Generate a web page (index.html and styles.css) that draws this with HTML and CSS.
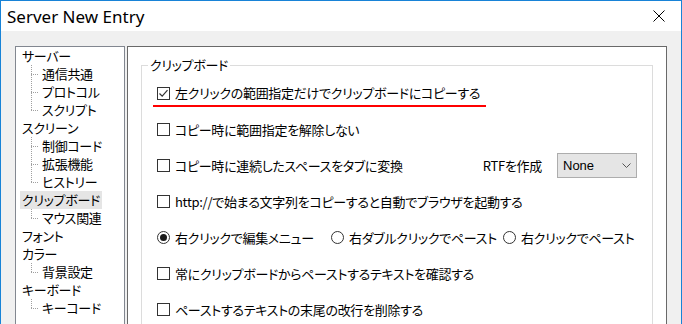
FILE: index.html
```html
<!DOCTYPE html>
<html lang="ja">
<head>
    <meta charset="UTF-8">
    <title>Server New Entry</title>
    <link rel="stylesheet" href="styles.css">
</head>
<body>
    <div class="window">
        <div class="titlebar">
            <span class="title">Server New Entry</span>
            <svg class="close" width="12" height="12" viewBox="0 0 12 12">
                <path d="M0.5 0.5 L11.5 11.5 M11.5 0.5 L0.5 11.5" stroke="#000" stroke-width="1" fill="none"/>
            </svg>
        </div>

        <div class="client">
            <ul class="tree">
                <li><span class="label">サーバー</span></li>
                <li class="child"><span class="label">通信共通</span></li>
                <li class="child"><span class="label">プロトコル</span></li>
                <li class="child last"><span class="label">スクリプト</span></li>
                <li><span class="label">スクリーン</span></li>
                <li class="child"><span class="label">制御コード</span></li>
                <li class="child"><span class="label">拡張機能</span></li>
                <li class="child last"><span class="label">ヒストリー</span></li>
                <li class="selected"><span class="label">クリップボード</span></li>
                <li class="child last"><span class="label">マウス関連</span></li>
                <li><span class="label">フォント</span></li>
                <li><span class="label">カラー</span></li>
                <li class="child last"><span class="label">背景設定</span></li>
                <li><span class="label">キーボード</span></li>
                <li class="child last"><span class="label">キーコード</span></li>
            </ul>

            <div class="page">
                <div class="group">
                    <span class="group-title">クリップボード</span>

                    <div class="row">
                        <span class="marked">
                            <span class="check">
                                <svg width="11" height="11" viewBox="0 0 11 11">
                                    <path d="M1.5 5.5 L4.2 8.2 L9.5 2.2" stroke="#333" stroke-width="1.2" fill="none"/>
                                </svg>
                            </span>
                            左クリックの範囲指定だけでクリップボードにコピーする
                        </span>
                    </div>
                    <div class="row">
                        <span class="check"></span>コピー時に範囲指定を解除しない
                    </div>
                    <div class="row">
                        <span class="check"></span>コピー時に連続したスペースをタブに変換
                        <span class="rtf">RTFを作成</span>
                        <span class="combo">None
                            <svg width="9" height="5" viewBox="0 0 9 5">
                                <path d="M0.5 0.5 L4.5 4.5 L8.5 0.5" stroke="#555" stroke-width="1" fill="none"/>
                            </svg>
                        </span>
                    </div>
                    <div class="row">
                        <span class="check"></span>http://で始まる文字列をコピーすると自動でブラウザを起動する
                    </div>
                    <div class="row radios">
                        <span class="radio-item"><span class="radio on"></span>右クリックで編集メニュー</span>
                        <span class="radio-item"><span class="radio"></span>右ダブルクリックでペースト</span>
                        <span class="radio-item"><span class="radio"></span>右クリックでペースト</span>
                    </div>
                    <div class="row">
                        <span class="check"></span>常にクリップボードからペーストするテキストを確認する
                    </div>
                    <div class="row">
                        <span class="check"></span>ペーストするテキストの末尾の改行を削除する
                    </div>
                </div>
            </div>
        </div>
    </div>
</body>
</html>
```

FILE: styles.css
```css
body {
    margin: 0;
    font-family: "Noto Sans CJK JP", sans-serif;
    font-size: 13px;
    letter-spacing: -0.3px;
    font-feature-settings: "palt";
    color: #000;
}
.window {
    width: 682px;
    height: 324px;
    box-sizing: border-box;
    border: 1px solid #1883d7;
    border-bottom: none;
    background: #f0f0f0;
    overflow: hidden;
}
.titlebar {
    height: 30px;
    background: #fff;
    display: flex;
    align-items: center;
    justify-content: space-between;
    padding: 0 16px 0 6px;
}
.title {
    font-family: "Noto Sans", sans-serif;
    font-size: 17px;
    letter-spacing: 0;
}
.client {
    display: flex;
    gap: 2px;
    padding: 15px 14px 0;
}

/* tree on the left */
.tree {
    width: 110px;
    height: 300px;
    flex-shrink: 0;
    box-sizing: border-box;
    border: 1px solid #828790;
    background: #fff;
    margin: 0;
    padding: 0;
    list-style: none;
}
.tree li {
    height: 18px;
    line-height: 18px;
    padding-left: 4px;
}
.tree li.child {
    padding-left: 24px;
    background-image:
        repeating-linear-gradient(to bottom, #a0a0a0 0 1px, transparent 1px 2px),
        repeating-linear-gradient(to right, #a0a0a0 0 1px, transparent 1px 2px);
    background-size: 1px 18px, 8px 1px;
    background-position: 15px 0, 15px 9px;
    background-repeat: no-repeat;
}
.tree li.child.last {
    background-size: 1px 10px, 8px 1px;
}
.tree .label {
    display: inline-block;
    height: 18px;
    padding: 0 2px;
    vertical-align: top;
}
.tree .selected .label {
    background: #e5e5e5;
}

/* right page */
.page {
    width: 540px;
    height: 300px;
    flex-shrink: 0;
    box-sizing: border-box;
    border: 1px solid #696969;
    background: #fff;
    padding: 18px 13px 0;
}
.group {
    position: relative;
    height: 300px;
    border: 1px solid #dcdcdc;
    padding: 9px 15px 0;
}
.group-title {
    position: absolute;
    top: -10px;
    left: 6px;
    padding: 0 2px;
    line-height: 18px;
    background: #fff;
}
.row {
    display: flex;
    align-items: center;
    height: 36px;
    white-space: nowrap;
}
.check {
    width: 13px;
    height: 13px;
    flex-shrink: 0;
    box-sizing: border-box;
    border: 1px solid #333;
    background: #fff;
    margin-right: 5px;
    display: flex;
}
.marked {
    position: relative;
    display: flex;
    align-items: center;
    line-height: 18px;
}
.marked::after {
    content: "";
    position: absolute;
    left: -4px;
    right: -6px;
    top: 21px;
    height: 2px;
    background: #f00;
}
.rtf {
    margin-left: auto;
    margin-right: 15px;
}
.combo {
    width: 80px;
    height: 25px;
    box-sizing: border-box;
    border: 1px solid #adadad;
    background: #e5e5e5;
    display: flex;
    align-items: center;
    justify-content: space-between;
    padding: 0 5px 0 5px;
    font-family: "Liberation Sans", sans-serif;
    font-size: 13px;
    letter-spacing: 0;
}
.radios {
    display: grid;
    grid-template-columns: 174px 172px auto;
}
.radio-item {
    display: flex;
    align-items: center;
}
.radio {
    width: 13px;
    height: 13px;
    flex-shrink: 0;
    box-sizing: border-box;
    border: 1px solid #333;
    border-radius: 50%;
    background: #fff;
    margin-right: 5px;
    display: flex;
    align-items: center;
    justify-content: center;
}
.radio.on::after {
    content: "";
    width: 7px;
    height: 7px;
    border-radius: 50%;
    background: #1a1a1a;
}
```
